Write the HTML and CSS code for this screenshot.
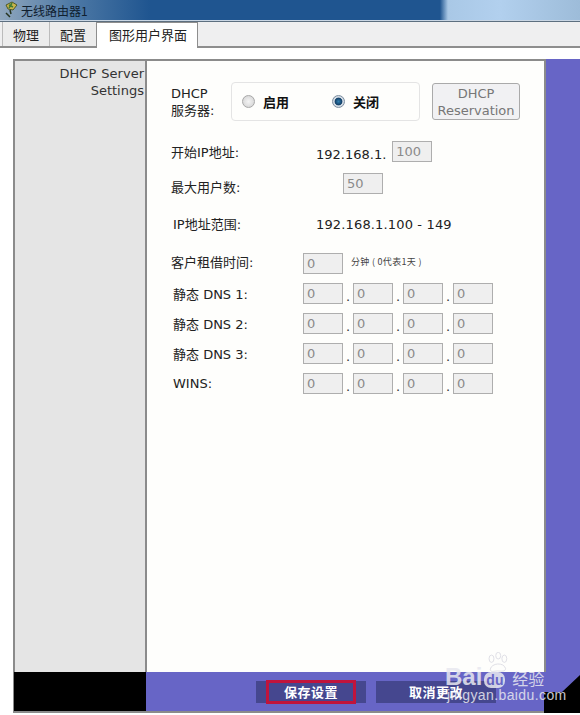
FILE: index.html
```html
<!DOCTYPE html>
<html>
<head>
  <title>无线路由器1</title>
  <link rel="stylesheet" href="styles.css">
</head>
<body>
<div class="titlebar">
  <svg class="app-icon" width="16" height="18" viewBox="0 0 16 18">
    <path d="M3 4 L9 1 L14 4 L10 9 L5 8 Z" fill="#c9b44a" stroke="#4d5a2a"/>
    <path d="M6 4 L10 6 M9 2 L6 7" stroke="#3f7a35" stroke-width="1.5"/>
    <path d="M7 9 L8 13 M3 12 L7 16" stroke="#26331f" stroke-width="1.5"/>
  </svg>
  <span class="title-text">无线路由器1</span>
  <div class="title-blur"></div>
</div>
<div class="tabs">
  <div class="tab">物理</div>
  <div class="tab">配置</div>
  <div class="tab tab-active">图形用户界面</div>
</div>
<div class="frame">
  <div class="frame-body">
    <div class="sidebar">DHCP Server<br>Settings</div>
    <div class="main">
      <div class="dhcp-row">
        <div class="dhcp-label">DHCP<br>服务器:</div>
        <div class="radio-box">
          <span class="radio"></span><b class="radio-text">启用</b>
          <span class="radio radio-on"></span><b class="radio-text">关闭</b>
        </div>
        <div class="reservation">DHCP<br>Reservation</div>
      </div>
      <div class="row row-start">
        <div class="label label-low">开始IP地址:</div>
        <div class="value">192.168.1.</div>
        <div class="field field-start">100</div>
      </div>
      <div class="row row-max">
        <div class="label label-lower">最大用户数:</div>
        <div class="field field-max">50</div>
      </div>
      <div class="row row-range">
        <div class="label label-in">IP地址范围:</div>
        <div class="value value-range">192.168.1.100 - 149</div>
      </div>
      <div class="row row-lease">
        <div class="label label-high">客户租借时间:</div>
        <div class="field">0</div>
        <div class="hint">分钟 ( 0代表1天 )</div>
      </div>
      <div class="row row-ip">
        <div class="label label-in">静态 DNS 1:</div>
        <div class="field">0</div><span class="dot">.</span><div class="field">0</div><span class="dot">.</span><div class="field">0</div><span class="dot">.</span><div class="field">0</div>
      </div>
      <div class="row row-ip">
        <div class="label label-in">静态 DNS 2:</div>
        <div class="field">0</div><span class="dot">.</span><div class="field">0</div><span class="dot">.</span><div class="field">0</div><span class="dot">.</span><div class="field">0</div>
      </div>
      <div class="row row-ip">
        <div class="label label-in">静态 DNS 3:</div>
        <div class="field">0</div><span class="dot">.</span><div class="field">0</div><span class="dot">.</span><div class="field">0</div><span class="dot">.</span><div class="field">0</div>
      </div>
      <div class="row row-ip">
        <div class="label label-in">WINS:</div>
        <div class="field">0</div><span class="dot">.</span><div class="field">0</div><span class="dot">.</span><div class="field">0</div><span class="dot">.</span><div class="field">0</div>
      </div>
    </div>
    <div class="side-purple"></div>
  </div>
  <div class="footer">
    <div class="footer-black"></div>
    <div class="footer-bar">
      <div class="action action-save"><span class="save-mark">保存设置</span></div>
      <div class="action action-cancel">取消更改</div>
    </div>
  </div>
  <div class="corner"></div>
</div>
<div class="watermark">
  <svg class="paw" width="38" height="22" viewBox="0 0 38 36" fill="none" stroke="#d8d8e0" stroke-width="1.5">
    <ellipse cx="10" cy="11" rx="4" ry="6"/>
    <ellipse cx="21" cy="6" rx="4" ry="5.5"/>
    <ellipse cx="31" cy="11" rx="4" ry="6"/>
    <path d="M8 28 C10 18 30 16 33 27 C33 33 25 31 20 31 C14 31 8 34 8 28 Z"/>
  </svg>
  <div class="wm-logo">Bai<span class="wm-du">du</span> <span class="wm-cn">经验</span></div>
  <div class="wm-url">jingyan.baidu.com</div>
</div>
</body>
</html>
```
FILE: styles.css
```css
html, body {
  margin: 0;
  height: 715px;
  overflow: hidden;
  background: #fff;
}
body {
  position: relative;
  font-family: "DejaVu Sans", "Noto Sans CJK SC", sans-serif;
  font-size: 13px;
  color: #222;
}
.titlebar {
  height: 20px;
  display: flex;
  align-items: center;
  background: linear-gradient(90deg, #8fa6bd 0, #4f7aa6 70px, #1f5590 150px, #1f5590 100%);
  border-bottom: 1px solid #c9d6e4;
  position: relative;
  overflow: hidden;
}
.app-icon {
  margin-left: 3px;
  flex: none;
}
.title-text {
  margin-left: 2px;
  font-family: "Noto Sans CJK SC", sans-serif;
  font-size: 12px;
  color: #10202f;
}
.title-blur {
  position: absolute;
  left: 440px;
  right: 0;
  top: 0;
  bottom: 0;
  background: linear-gradient(90deg, #1f5590, #a9c8e6 8px, #b2d0ee 60px, #9dbcd9 100%);
}
.tabs {
  height: 24px;
  display: flex;
  padding-left: 2px;
  background: #efeff0;
  border-top: 1px solid #5d6f80;
  border-bottom: 2px solid #8e8e8e;
  font-family: "Noto Sans CJK SC", sans-serif;
  font-size: 13px;
}
.tab {
  width: 47px;
  text-align: center;
  line-height: 26px;
  background: #ececec;
  border-left: 1px solid #bbb;
  box-sizing: border-box;
}
.tab-active {
  width: 102px;
  height: 26px;
  padding-left: 2px;
  background: #fff;
  border: 1px solid #8e8e8e;
  border-bottom: 0;
  line-height: 24px;
}

.frame {
  margin: 11px 0 0 13px;
  width: 567px;
  height: 654px;
  display: flex;
  flex-direction: column;
  position: relative;
}
.frame-body {
  flex: 1;
  display: flex;
  min-height: 0;
}
.sidebar {
  width: 129px;
  padding-top: 4px;
  padding-right: 1px;
  background: #e5e5e5;
  border: 2px solid #8b8b8b;
  border-bottom: 0;
  text-align: right;
  line-height: 17px;
  word-spacing: 1px;
  color: #333;
}
.main {
  width: 373px;
  padding: 21px 0 0 24px;
  background: #fefefc;
  border-top: 2px solid #8b8b8b;
  border-right: 2px solid #8b8b8b;
}
.side-purple {
  flex: 1;
  background: #6765c6;
}

.dhcp-row {
  height: 39px;
  display: flex;
}
.dhcp-label {
  width: 60px;
  padding-top: 3px;
  line-height: 17px;
}
.radio-box {
  width: 187px;
  height: 37px;
  display: flex;
  align-items: center;
  border: 1px solid #e4e4e4;
  border-radius: 4px;
}
.radio {
  width: 11px;
  height: 11px;
  margin-left: 10px;
  border-radius: 50%;
  border: 1px solid #a8a8a8;
  background: radial-gradient(circle, #f4f4f4, #d0d0d0);
}
.radio-on {
  margin-left: 43px;
  border-color: #7d8ea0;
  background: radial-gradient(circle, #2f7fb0 0, #123e66 45%, #d8e0e8 55%, #b9c5d0 100%);
}
.radio-text {
  margin-left: 8px;
  font-family: "Noto Sans CJK SC", sans-serif;
  font-size: 13px;
  color: #111;
}
.reservation {
  width: 86px;
  height: 34px;
  padding-top: 1px;
  margin: 1px 0 0 12px;
  text-align: center;
  line-height: 17px;
  color: #777;
  background: #f1f1f3;
  border: 1px solid #aaa;
  border-radius: 3px;
}

.row {
  height: 21px;
  display: flex;
  align-items: center;
}
.row-start { margin-top: 20px; }
.row-max { margin-top: 11px; }
.row-range { margin-top: 19px; }
.row-lease { margin-top: 19px; }
.row-ip { margin-top: 9px; }
.label {
  width: 132px;
  flex: none;
  box-sizing: border-box;
}
.label-in { padding-left: 2px; }
.label-low { margin-top: -1px; }
.label-lower { padding-top: 5px; }
.label-high { margin-top: -4px; }
.value {
  margin-left: 13px;
  padding-top: 5px;
  color: #222;
}
.value-range {
  padding-top: 2px;
  letter-spacing: 0.15px;
}
.field {
  width: 35px;
  height: 19px;
  flex: none;
  padding-left: 3px;
  border: 1px solid #aeaeae;
  background: #efefef;
  color: #8a8a8a;
  line-height: 19px;
}
.field-start { margin-left: 6px; }
.field-max { margin-left: 40px; }
.dot {
  width: 10px;
  text-align: center;
  padding-top: 6px;
  color: #333;
  font-size: 13px;
}
.hint {
  margin: -4px 0 0 8px;
  font-family: "Noto Sans CJK SC", sans-serif;
  font-size: 9px;
  letter-spacing: 0.3px;
  color: #444;
}

.footer {
  height: 39px;
  display: flex;
  border-bottom: 2px solid #8b8b8b;
  flex: none;
}
.footer-black {
  width: 133px;
  background: #000;
  border-left: 1px solid #8b8b8b;
  box-sizing: border-box;
}
.footer-bar {
  flex: 1;
  display: flex;
  gap: 10px;
  padding: 9px 0 0 110px;
  background: #6765c6;
}
.action {
  height: 22px;
  line-height: 22px;
  background: #45478f;
  color: #fff;
  font-family: "Noto Sans CJK SC", sans-serif;
  font-weight: bold;
  font-size: 13px;
  text-align: center;
  letter-spacing: 0.5px;
}
.action-save { width: 110px; }
.action-cancel { width: 120px; }
.save-mark {
  display: block;
  width: 84px;
  height: 18px;
  margin: 0 auto;
  line-height: 18px;
  border: 3px solid #c0143c;
  position: relative;
  top: -1px;
}
.corner {
  position: absolute;
  right: 0;
  bottom: 0;
  width: 36px;
  height: 38px;
  background: #000;
  clip-path: polygon(0 17px, 18px 17px, 36px 0, 36px 38px, 0 38px);
}

.watermark {
  position: absolute;
  left: 442px;
  top: 652px;
  width: 130px;
  height: 60px;
  color: #e8e8f0;
  opacity: 0.85;
}
.paw {
  position: absolute;
  left: 36px;
  top: 0;
}
.wm-logo {
  position: absolute;
  left: 3px;
  top: 11px;
  font-family: "Liberation Sans", sans-serif;
  font-size: 24px;
  font-weight: bold;
  white-space: nowrap;
}
.wm-du {
  font-size: 14px;
  background: #e8e8f0;
  color: #6765c6;
  border-radius: 7px;
  padding: 0 2px;
  margin-left: 2px;
}
.wm-cn {
  font-family: "Noto Sans CJK SC", sans-serif;
  font-size: 16px;
  font-weight: normal;
}
.wm-url {
  position: absolute;
  left: 5px;
  top: 35px;
  font-family: "Liberation Sans", sans-serif;
  font-size: 14px;
  letter-spacing: 0.4px;
  white-space: nowrap;
}
```
